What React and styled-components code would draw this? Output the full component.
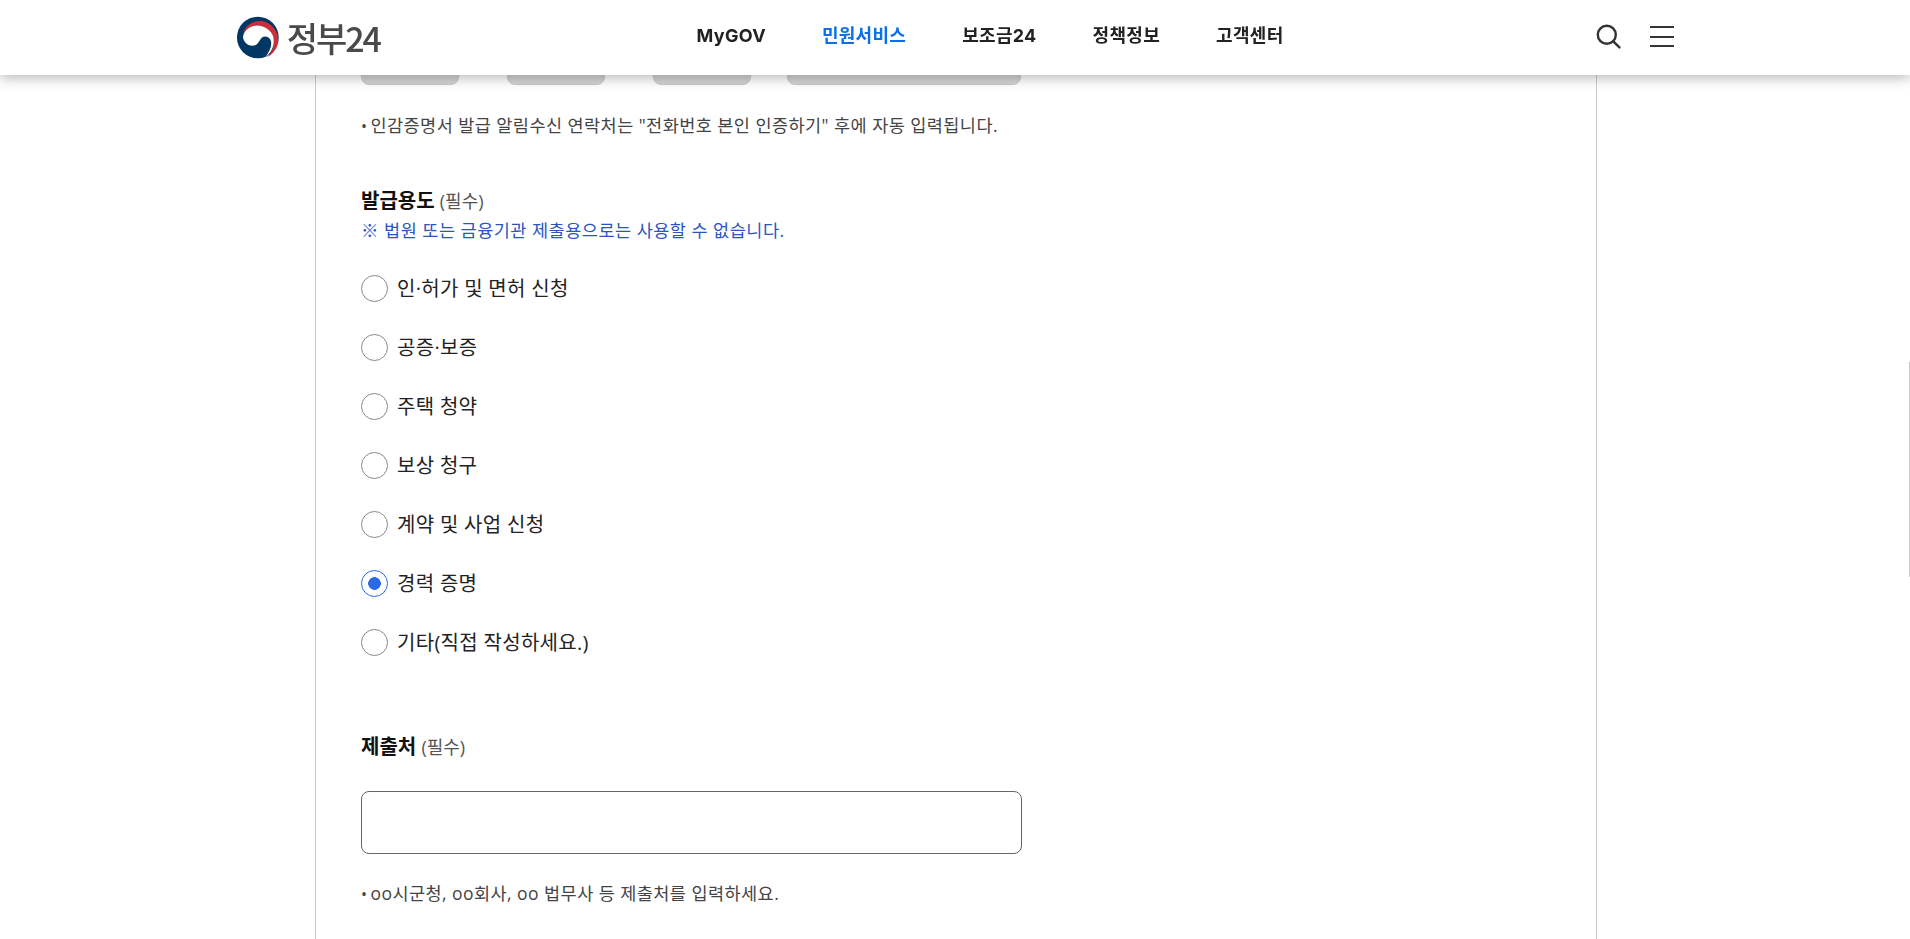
import React from 'react'
import styled, { createGlobalStyle } from 'styled-components'

const KR = `"Noto Sans CJK KR", "Noto Sans", sans-serif`
const BODY = `"Open Sans", ${KR}`

const Global = createGlobalStyle`
  html, body { margin: 0; padding: 0; height: 100%; overflow: hidden; background: #fff; }
  body { font-family: ${BODY}; color: #222; }
`

const NAV = ['MyGOV', '민원서비스', '보조금24', '정책정보', '고객센터']
const PURPOSES = ['인·허가 및 면허 신청', '공증·보증', '주택 청약', '보상 청구', '계약 및 사업 신청', '경력 증명', '기타(직접 작성하세요.)']

function LogoMark() {
  return (
    <svg width="52" height="52" viewBox="0 0 52 52">
      <circle cx="26" cy="25.5" r="21" fill="#003764" />
      <path d="M11 23C12 14 21 8 30 9C41 11 47.5 21 46.5 30C45.5 37 41 42 35 46C40 41 43 34 42 28C41 21 35 14 26 13.5C19 13.5 13 18 11 23Z" fill="#cd2e3a" />
      <path d="M11 25C12 18 19 13.5 26 13.5C35 14 42 21 42 28C42.5 35 39 41 34 45C37 40 39.5 36 39.5 31.5C39.5 27.5 37 24.5 33.5 24.5C28 24.5 28 31 24 33C19 35.5 12 32 11 25Z" fill="#fff" />
    </svg>
  )
}

function SearchGlyph() {
  return (
    <svg width="25" height="25" viewBox="0 0 25 25" fill="none" stroke="#333" strokeWidth="2.4" strokeLinecap="round">
      <circle cx="10.8" cy="10.8" r="9" />
      <path d="M17.6 17.6L23.4 23.4" />
    </svg>
  )
}

export default function App() {
  return (
    <>
      <Global />
      <Header>
        <Logo>
          <LogoMark />
          <LogoText>정부24</LogoText>
        </Logo>
        <Nav>
          {NAV.map((item) => (
            <NavItem key={item} $active={item === '민원서비스'}>{item}</NavItem>
          ))}
        </Nav>
        <Tools>
          <SearchGlyph />
          <Burger><i /><i /><i /></Burger>
        </Tools>
      </Header>

      <Panel>
        <ButtonRow>
          <GrayButton $w={98} />
          <GrayButton $w={98} />
          <GrayButton $w={98} />
          <GrayButton $w={234} $gap={36} />
        </ButtonRow>
        <Hint $top={28}><Dot>•</Dot>인감증명서 발급 알림수신 연락처는 "전화번호 본인 인증하기" 후에 자동 입력됩니다.</Hint>

        <Title $top={50}>발급용도 <Req>(필수)</Req></Title>
        <Notice>※ 법원 또는 금융기관 제출용으로는 사용할 수 없습니다.</Notice>

        <RadioList>
          {PURPOSES.map((label) => (
            <RadioRow key={label}>
              <Radio $checked={label === '경력 증명'} />
              <RadioLabel>{label}</RadioLabel>
            </RadioRow>
          ))}
        </RadioList>

        <Title $top={78}>제출처 <Req>(필수)</Req></Title>
        <TextBox />
        <Hint $top={27}><Dot>•</Dot>oo시군청, oo회사, oo 법무사 등 제출처를 입력하세요.</Hint>
      </Panel>

      <ScrollMark />
    </>
  )
}

const Header = styled.header`
  position: fixed;
  top: 0;
  left: 0;
  right: 0;
  z-index: 10;
  height: 75px;
  box-sizing: border-box;
  padding: 0 236px 0 232px;
  display: flex;
  align-items: center;
  justify-content: space-between;
  background: #fff;
  box-shadow: 0 3px 12px rgba(0, 0, 0, 0.28);
`
const Logo = styled.div`
  display: flex;
  align-items: center;
  width: 148px;
`
const LogoText = styled.span`
  margin-left: 3px;
  font-family: ${KR};
  font-size: 34px;
  font-weight: 500;
  line-height: 40px;
  letter-spacing: -2px;
  color: #4a4a4a;
  white-space: nowrap;
`
const Nav = styled.nav`
  display: flex;
  gap: 56px;
  margin: 0 0 3px 4px;
`
const NavItem = styled.a`
  font-family: Inter, ${KR};
  font-size: 18px;
  font-weight: 700;
  line-height: 24px;
  letter-spacing: 0.3px;
  color: ${(p) => (p.$active ? '#0b70e6' : '#222')};
  white-space: nowrap;
`
const Tools = styled.div`
  display: flex;
  align-items: center;
  gap: 29px;
  margin-bottom: 2px;
`
const Burger = styled.div`
  width: 24px;
  display: flex;
  flex-direction: column;
  gap: 7.5px;
  i {
    display: block;
    height: 2px;
    background: #333;
  }
`
const Panel = styled.main`
  width: 1282px;
  height: 939px;
  margin: 0 0 0 315px;
  box-sizing: border-box;
  padding: 41px 0 0 45px;
  border-left: 1px solid #ccc;
  border-right: 1px solid #ccc;
  overflow: hidden;
`
const ButtonRow = styled.div`
  display: flex;
  gap: 48px;
`
const GrayButton = styled.div`
  box-sizing: border-box;
  width: ${(p) => p.$w}px;
  height: 44px;
  margin-left: ${(p) => (p.$gap ? p.$gap - 48 : 0)}px;
  background: #d4d4d4;
  border: 1px solid #c8c8c8;
  border-radius: 8px;
`
const Hint = styled.p`
  margin: ${(p) => p.$top}px 0 0;
  font-size: 17.5px;
  line-height: 24px;
  letter-spacing: 0.45px;
  color: #444;
`
const Dot = styled.span`
  margin-right: 3px;
  font-size: 16px;
`
const Title = styled.h3`
  margin: ${(p) => p.$top}px 0 0;
  font-size: 20px;
  font-weight: 700;
  line-height: 26px;
  color: #111;
`
const Req = styled.span`
  font-size: 18px;
  font-weight: 400;
  color: #555;
`
const Notice = styled.p`
  margin: 4px 0 0;
  font-size: 17.5px;
  line-height: 24px;
  letter-spacing: 0.5px;
  color: #2a55c0;
`
const RadioList = styled.div`
  margin-top: 33px;
  display: flex;
  flex-direction: column;
  gap: 32px;
`
const RadioRow = styled.label`
  display: flex;
  align-items: center;
  gap: 9px;
  height: 27px;
`
const Radio = styled.span`
  box-sizing: border-box;
  width: 27px;
  height: 27px;
  border-radius: 50%;
  border: 1px solid ${(p) => (p.$checked ? '#2a6ae8' : '#888')};
  background: ${(p) => (p.$checked ? 'radial-gradient(circle, #2a6ae8 6px, #fff 6.6px)' : '#fff')};
`
const RadioLabel = styled.span`
  font-size: 20px;
  line-height: 26px;
  letter-spacing: 0.3px;
  color: #222;
`
const TextBox = styled.div`
  box-sizing: border-box;
  width: 661px;
  height: 63px;
  margin-top: 31px;
  border: 1px solid #666;
  border-radius: 8px;
  background: #fff;
`
const ScrollMark = styled.div`
  position: fixed;
  top: 362px;
  right: 0;
  width: 1px;
  height: 215px;
  background: #ccc;
`
